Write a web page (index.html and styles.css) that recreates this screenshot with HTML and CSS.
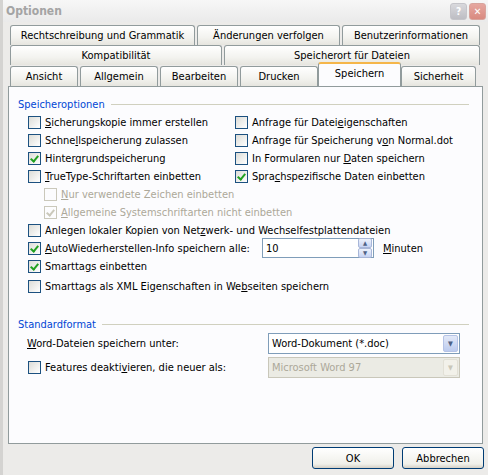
FILE: index.html
```html
<!DOCTYPE html>
<html lang="de">
<head>
    <meta charset="UTF-8">
    <title>Optionen</title>
    <link rel="stylesheet" href="styles.css">
</head>
<body>
    <div class="window">
        <div class="titlebar">
            <span class="title">Optionen</span>
            <div class="tb-buttons">
                <span class="tb-btn help">?</span>
                <span class="tb-btn close">&#x2715;</span>
            </div>
        </div>

        <div class="tabs">
            <div class="tab-row">
                <div class="tab w185">Rechtschreibung und Grammatik</div>
                <div class="tab w143">Änderungen verfolgen</div>
                <div class="tab w138">Benutzerinformationen</div>
            </div>
            <div class="tab-row">
                <div class="tab w212">Kompatibilität</div>
                <div class="tab w256">Speicherort für Dateien</div>
            </div>
            <div class="tab-row front">
                <div class="tab w68">Ansicht</div>
                <div class="tab w78">Allgemein</div>
                <div class="tab w78">Bearbeiten</div>
                <div class="tab w78">Drucken</div>
                <div class="tab active">Speichern</div>
                <div class="tab w75">Sicherheit</div>
            </div>
        </div>

        <div class="panel">
            <div class="group-title"><span>Speicheroptionen</span></div>
            <div class="opts">
                <div class="col">
                    <label class="cb"><span class="box"></span><span><u>S</u>icherungskopie immer erstellen</span></label>
                    <label class="cb"><span class="box"></span><span>Schne<u>l</u>lspeicherung zulassen</span></label>
                    <label class="cb"><span class="box checked"></span><span>Hinter<u>g</u>rundspeicherung</span></label>
                    <label class="cb"><span class="box"></span><span><u>T</u>rueType-Schriftarten einbetten</span></label>
                </div>
                <div class="col right">
                    <label class="cb"><span class="box"></span><span>Anfrage für Datei<u>e</u>igenschaften</span></label>
                    <label class="cb"><span class="box"></span><span>Anfrage für Speicherung v<u>o</u>n Normal.dot</span></label>
                    <label class="cb"><span class="box"></span><span>In Formularen nur <u>D</u>aten speichern</span></label>
                    <label class="cb"><span class="box checked"></span><span>Spra<u>c</u>hspezifische Daten einbetten</span></label>
                </div>
            </div>
            <div class="sub">
                <label class="cb disabled"><span class="box"></span><span><u>N</u>ur verwendete Zeichen einbetten</span></label>
                <label class="cb disabled"><span class="box checked"></span><span><u>A</u>llgemeine Systemschriftarten nicht einbetten</span></label>
            </div>
            <div class="list">
                <label class="cb"><span class="box"></span><span>Anlegen lokaler Kopien von Net<u>z</u>werk- und Wechselfestplattendateien</span></label>
                <div class="auto-row">
                    <label class="cb"><span class="box checked"></span><span><u>A</u>utoWiederherstellen-Info speichern alle:</span></label>
                    <div class="spin">
                        <span class="spin-val">10</span>
                        <span class="spin-btns"><span class="sb">&#9650;</span><span class="sb">&#9660;</span></span>
                    </div>
                    <span class="unit"><u>M</u>inuten</span>
                </div>
                <label class="cb"><span class="box checked"></span><span>Smartta<u>g</u>s einbetten</span></label>
                <label class="cb gap"><span class="box"></span><span>Smarttags als XML Eigenschaften in We<u>b</u>seiten speichern</span></label>
            </div>

            <div class="group-title second"><span>Standardformat</span></div>
            <div class="format-row">
                <span class="format-label"><u>W</u>ord-Dateien speichern unter:</span>
                <div class="select">
                    <span class="sel-val">Word-Dokument (*.doc)</span>
                    <span class="sel-btn">&#9660;</span>
                </div>
            </div>
            <div class="format-row next">
                <label class="cb"><span class="box"></span><span>Features deakti<u>v</u>ieren, die neuer als:</span></label>
                <div class="select disabled">
                    <span class="sel-val">Microsoft Word 97</span>
                    <span class="sel-btn">&#9660;</span>
                </div>
            </div>
        </div>

        <div class="buttons">
            <button class="btn">OK</button>
            <button class="btn">Abbrechen</button>
        </div>

        <svg class="arrow" width="488" height="475" viewBox="0 0 488 475">
            <line x1="237" y1="107" x2="60" y2="178" stroke="#e2312f" stroke-width="3" stroke-linecap="round"/>
            <polygon points="46,184 66,170 70,183" fill="#e2312f"/>
        </svg>
    </div>
</body>
</html>
```

FILE: styles.css
```css
body {
    margin: 0;
    font-family: "DejaVu Sans Condensed", "DejaVu Sans", sans-serif;
    font-stretch: condensed;
    font-size: 11px;
    color: #000;
    background: #ecebe9;
}

.window {
    position: relative;
    width: 485px;
    height: 475px;
    border-left: 3px solid #d4d3d1;
    background: #ecebe9;
    overflow: hidden;
}

.titlebar {
    height: 22px;
    display: flex;
    align-items: center;
    justify-content: space-between;
    padding: 0 2px 0 3px;
    background: linear-gradient(#f7f7f7, #eaeaea);
}

.title {
    font-weight: bold;
    font-size: 12px;
    color: #a4a4a4;
}

.tb-buttons {
    display: flex;
    gap: 2px;
}

.tb-btn {
    width: 15px;
    height: 15px;
    border-radius: 3px;
    display: flex;
    align-items: center;
    justify-content: center;
    font-size: 10px;
    font-weight: bold;
    color: #fff;
}

.help {
    background: linear-gradient(#d9d9dd, #bdbdc3);
    border: 1px solid #c5c5ca;
}

.close {
    background: linear-gradient(#e6a7a0, #d98a80);
    border: 1px solid #d8a49d;
}

.tabs {
    padding: 3px 0 0 7px;
}

.tab-row {
    display: flex;
    gap: 2px;
    height: 20px;
}

.tab-row.front {
    height: 21px;
    align-items: flex-end;
}

.tab {
    box-sizing: border-box;
    height: 20px;
    border: 1px solid #919b9c;
    border-bottom: none;
    border-radius: 3px 3px 0 0;
    background: linear-gradient(#ffffff, #f3f3ef 60%, #e6e5df);
    display: flex;
    align-items: center;
    justify-content: center;
    white-space: nowrap;
}

.w185 { width: 185px; }
.w143 { width: 143px; }
.w138 { width: 138px; }
.w212 { width: 212px; }
.w256 { width: 256px; }
.w68 { width: 68px; }
.w78 { width: 78px; }
.w75 { width: 75px; }

.tab.active {
    width: 83px;
    height: 24px;
    margin: 0 -2px;
    position: relative;
    z-index: 2;
    background: #fcfcfe;
    border-top: 2px solid #f5b64a;
    padding-bottom: 3px;
}

.panel {
    position: relative;
    z-index: 1;
    box-sizing: border-box;
    width: 475px;
    height: 358px;
    margin-left: 5px;
    border: 1px solid #919b9c;
    background: #fcfcfe;
    padding: 10px 13px 0 9px;
}

.group-title {
    display: flex;
    align-items: center;
    gap: 6px;
    color: #0046d5;
    height: 14px;
}

.group-title::after {
    content: "";
    flex: 1;
    border-top: 1px solid #d0d0bf;
}

.group-title.second {
    margin-top: 24px;
}

.opts {
    display: flex;
    padding: 4px 0 0 10px;
}

.col {
    display: flex;
    flex-direction: column;
    gap: 4px;
    width: 207px;
}

.col.right {
    width: auto;
}

.cb {
    display: flex;
    align-items: center;
    gap: 4px;
    height: 14px;
    white-space: nowrap;
}

.box {
    box-sizing: border-box;
    width: 13px;
    height: 13px;
    flex: none;
    border: 1px solid #1c5180;
    background: linear-gradient(135deg, #dcdcd7, #ffffff);
    position: relative;
}

.box.checked::after {
    content: "";
    position: absolute;
    left: 3px;
    top: 1px;
    width: 3px;
    height: 6px;
    border: solid #21a121;
    border-width: 0 2px 2px 0;
    transform: rotate(40deg);
}

.disabled {
    color: #aca899;
}

.disabled .box {
    border-color: #cac8bb;
    background: #fcfcfe;
}

.disabled .box.checked::after {
    border-color: #cac8bb;
}

.sub {
    display: flex;
    flex-direction: column;
    gap: 4px;
    padding: 4px 0 0 26px;
}

.list {
    display: flex;
    flex-direction: column;
    gap: 4px;
    padding: 4px 0 0 10px;
}

.auto-row {
    display: flex;
    align-items: center;
    height: 14px;
}

.auto-row .cb {
    width: 234px;
}

.spin {
    box-sizing: border-box;
    width: 112px;
    height: 20px;
    margin: -3px 0;
    border: 1px solid #7f9db9;
    background: #fff;
    display: flex;
    align-items: center;
    justify-content: space-between;
    padding-left: 3px;
}

.spin-btns {
    display: flex;
    flex-direction: column;
    margin-right: 1px;
}

.sb {
    width: 12px;
    height: 8px;
    font-size: 6px;
    line-height: 8px;
    text-align: center;
    color: #4d6185;
    background: linear-gradient(#eef2fb, #c6d3f3);
    border: 1px solid #a8b6d8;
    border-radius: 2px;
}

.unit {
    margin-left: 9px;
}

.list .gap {
    margin-top: 2px;
}

.format-row {
    display: flex;
    align-items: center;
    justify-content: space-between;
    padding: 2px 9px 0 9px;
}

.format-row.next {
    padding-top: 3px;
    padding-left: 10px;
}

.select {
    box-sizing: border-box;
    width: 192px;
    height: 21px;
    border: 1px solid #7f9db9;
    background: #fff;
    display: flex;
    align-items: center;
    justify-content: space-between;
    padding-left: 3px;
}

.sel-btn {
    width: 15px;
    height: 17px;
    margin-right: 1px;
    font-size: 7px;
    display: flex;
    align-items: center;
    justify-content: center;
    color: #4d6185;
    background: linear-gradient(#e3e9f8, #bccbee);
    border: 1px solid #b5c3e6;
    box-sizing: border-box;
    border-radius: 2px;
}

.select.disabled {
    background: #ebebe4;
    border-color: #c9c7ba;
    color: #aca899;
}

.select.disabled .sel-btn {
    background: #f2f1ea;
    border-color: #e2e0d6;
    color: #c9c7ba;
}

.buttons {
    display: flex;
    justify-content: flex-end;
    gap: 8px;
    padding: 3px 4px 0 0;
}

.btn {
    width: 82px;
    height: 22px;
    font-family: inherit;
    font-size: 11px;
    border: 1px solid #003c74;
    border-radius: 3px;
    background: linear-gradient(#ffffff, #f0f0ea 80%, #d6d0c5);
    padding: 0;
}

.arrow {
    position: absolute;
    left: -3px;
    top: 0;
    pointer-events: none;
}
```
